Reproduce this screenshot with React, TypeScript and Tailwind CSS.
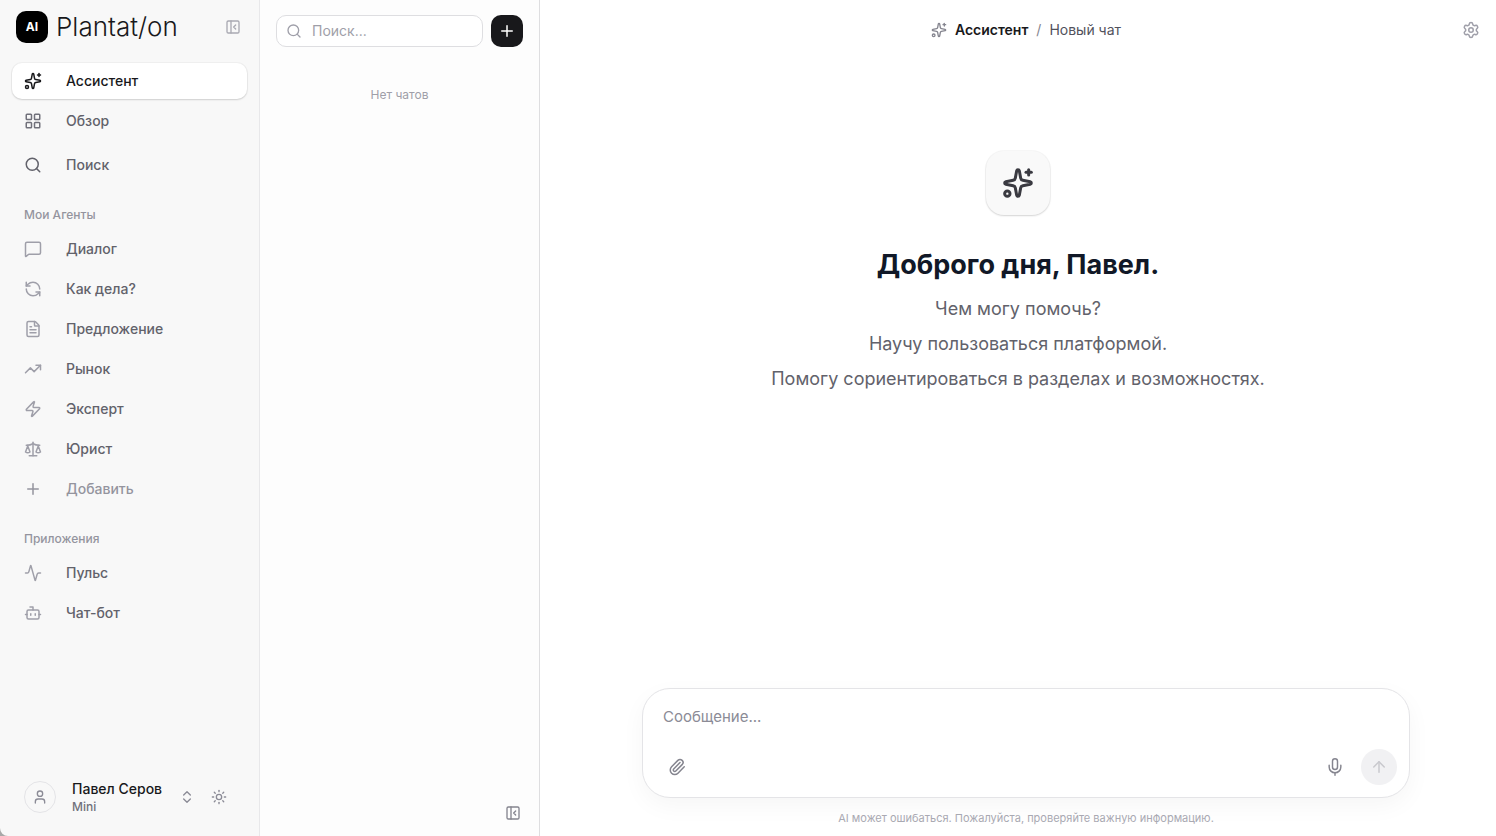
import { useState } from 'react'
import {
  Activity,
  ArrowUp,
  Bot,
  ChevronsUpDown,
  FileText,
  LayoutGrid,
  MessageSquare,
  Mic,
  PanelLeftClose,
  Paperclip,
  Plus,
  RefreshCcw,
  Scale,
  Search,
  Settings,
  Sparkles,
  Sun,
  TrendingUp,
  User,
  Zap,
  type LucideIcon,
} from 'lucide-react'

type NavEntry = { label: string; icon: LucideIcon }

const AGENTS: NavEntry[] = [
  { label: 'Диалог', icon: MessageSquare },
  { label: 'Как дела?', icon: RefreshCcw },
  { label: 'Предложение', icon: FileText },
  { label: 'Рынок', icon: TrendingUp },
  { label: 'Эксперт', icon: Zap },
  { label: 'Юрист', icon: Scale },
]

const APPS: NavEntry[] = [
  { label: 'Пульс', icon: Activity },
  { label: 'Чат-бот', icon: Bot },
]

const ROW = 'flex h-9 w-full items-center gap-6 rounded-[10px] px-3 text-sm font-medium'

function NavLink({ label, icon: Icon, iconClass = 'text-[#9f9fa9]' }: NavEntry & { iconClass?: string }) {
  return (
    <a href="#" className={`${ROW} text-[#62626b]`}>
      <Icon size={18} className={iconClass} />
      {label}
    </a>
  )
}

function SectionLabel({ children }: { children: string }) {
  return <h2 className="mt-6 mb-2 px-3 text-xs font-medium text-[#94949e]">{children}</h2>
}

function Sidebar() {
  return (
    <aside className="flex w-65 shrink-0 flex-col rounded-bl-lg border-r border-[#e8e8ea] bg-[#f8f8f8]">
      {/* Brand */}
      <div className="flex h-[54px] items-center px-4">
        <div className="flex size-8 items-center justify-center rounded-[10px] bg-black text-xs font-bold text-white">
          AI
        </div>
        <span className="ml-2 text-[26px] leading-8 font-light text-[#18181b]">Plantat/on</span>
        <button type="button" aria-label="Свернуть меню" className="ml-auto mr-0.5 text-[#a9a9b2]">
          <PanelLeftClose size={16} />
        </button>
      </div>

      <nav className="flex-1 px-3 pt-[9px]">
        <a href="#" aria-current="page" className={`${ROW} bg-white text-[#18181b] shadow-[0_1px_2px_rgba(0,0,0,0.14),0_0_0_1px_rgba(0,0,0,0.03)]`}>
          <Sparkles size={18} />
          Ассистент
        </a>
        <div className="mt-1 space-y-2">
          <NavLink label="Обзор" icon={LayoutGrid} iconClass="text-[#71717b]" />
          <NavLink label="Поиск" icon={Search} iconClass="text-[#62626b]" />
        </div>

        <SectionLabel>Мои Агенты</SectionLabel>
        <div className="space-y-1">
          {AGENTS.map((item) => (
            <NavLink key={item.label} {...item} />
          ))}
          <button type="button" className={`${ROW} text-[#94949e]`}>
            <Plus size={18} />
            Добавить
          </button>
        </div>

        <SectionLabel>Приложения</SectionLabel>
        <div className="space-y-1">
          {APPS.map((item) => (
            <NavLink key={item.label} {...item} />
          ))}
        </div>
      </nav>

      {/* Account */}
      <div className="flex items-center px-6 pb-[21px]">
        <button type="button" className="flex items-center text-left">
          <span className="flex size-8 items-center justify-center rounded-full border border-[#e4e4e7] text-[#8b8b96]">
            <User size={16} />
          </span>
          <span className="ml-4">
            <span className="block text-sm font-medium text-[#18181b]">Павел Серов</span>
            <span className="block text-xs font-medium text-[#71717b]">Mini</span>
          </span>
          <ChevronsUpDown size={16} className="ml-[17px] text-[#8b8b96]" />
        </button>
        <button type="button" aria-label="Сменить тему" className="ml-4 text-[#8b8b96]">
          <Sun size={16} />
        </button>
      </div>
    </aside>
  )
}

function ChatList() {
  return (
    <section aria-label="Чаты" className="flex w-70 shrink-0 flex-col border-r border-[#dedee0] bg-[#fdfdfd]">
      <div className="flex items-center gap-2 px-4 pt-[15px]">
        <label className="flex h-8 min-w-0 flex-1 items-center gap-2.5 rounded-[10px] border border-[#dedee1] bg-white pr-2.5 pl-[9px]">
          <Search size={16} className="shrink-0 text-[#9f9fa9]" />
          <input
            type="search"
            aria-label="Поиск чатов"
            placeholder="Поиск..."
            className="w-full min-w-0 bg-transparent text-sm outline-none placeholder:text-[#9f9fa9]"
          />
        </label>
        <button
          type="button"
          aria-label="Новый чат"
          className="flex size-8 items-center justify-center rounded-[10px] bg-[#18181b] text-white"
        >
          <Plus size={18} />
        </button>
      </div>
      <p className="mt-10 flex-1 text-center text-xs text-[#9f9fa9]">Нет чатов</p>
      <div className="flex justify-end px-[18px] pb-[15px]">
        <button type="button" aria-label="Скрыть список чатов" className="text-[#85858f]">
          <PanelLeftClose size={16} />
        </button>
      </div>
    </section>
  )
}

function Composer() {
  const [message, setMessage] = useState('')

  return (
    <form
      onSubmit={(e) => e.preventDefault()}
      className="mx-auto w-full max-w-3xl rounded-[28px] border border-[#e4e4e7] bg-white px-3 pt-4 pb-3 shadow-[0_8px_24px_rgba(0,0,0,0.04)]"
    >
      <textarea
        rows={1}
        value={message}
        onChange={(e) => setMessage(e.target.value)}
        aria-label="Сообщение"
        placeholder="Сообщение..."
        className="block h-11 w-full resize-none bg-transparent px-2 text-[15px] leading-6 outline-none placeholder:text-[#8b8b96]"
      />
      <div className="flex items-center">
        <button type="button" aria-label="Прикрепить файл" className="ml-1 flex size-9 items-center justify-center text-[#85858f]">
          <Paperclip size={18} />
        </button>
        <button type="button" aria-label="Голосовой ввод" className="mr-2 ml-auto flex size-9 items-center justify-center text-[#85858f]">
          <Mic size={20} strokeWidth={1.75} />
        </button>
        <button
          type="submit"
          aria-label="Отправить"
          disabled
          className="flex size-9 items-center justify-center rounded-full bg-[#f1f1f3] text-[#c9c9ce]"
        >
          <ArrowUp size={18} />
        </button>
      </div>
    </form>
  )
}

function Chat() {
  return (
    <main className="flex min-w-0 flex-1 flex-col bg-white">
      <header className="grid h-15 grid-cols-[1fr_auto_1fr] items-center pr-4 pl-8">
        <nav aria-label="Путь" className="col-start-2 flex items-center gap-2 text-sm">
          <Sparkles size={16} className="text-[#85858f]" />
          <a href="#" className="font-semibold text-[#18181b]">Ассистент</a>
          <span className="text-[#85858f]">/</span>
          <span className="text-[#52525c]">Новый чат</span>
        </nav>
        <button type="button" aria-label="Настройки" className="justify-self-end text-[#9f9fa9]">
          <Settings size={18} />
        </button>
      </header>

      <div className="flex flex-1 flex-col items-center px-6 pt-[91px] text-center">
        <div className="flex size-16 items-center justify-center rounded-[18px] bg-[#f9f9f9] text-[#3a3a41] shadow-[0_1px_2px_rgba(0,0,0,0.14),0_0_0_1px_rgba(0,0,0,0.03)]">
          <Sparkles size={32} strokeWidth={2.25} />
        </div>
        <h1 className="mt-8 text-[27px] leading-9 font-bold text-[#111827]">Доброго дня, Павел.</h1>
        <div className="mt-3 space-y-2 text-lg leading-[27px] text-[#62626b]">
          <p>Чем могу помочь?</p>
          <p>Научу пользоваться платформой.</p>
          <p>Помогу сориентироваться в разделах и возможностях.</p>
        </div>
      </div>

      <div className="pr-4 pb-2.5 pl-8">
        <Composer />
        <p className="mt-3 text-center text-[11px] leading-4 text-[#a9a9b2]">
          AI может ошибаться. Пожалуйста, проверяйте важную информацию.
        </p>
      </div>
    </main>
  )
}

export default function App() {
  return (
    <div className="flex min-h-screen bg-[#a8a8a8] font-['Inter',sans-serif] antialiased">
      <Sidebar />
      <ChatList />
      <Chat />
    </div>
  )
}
